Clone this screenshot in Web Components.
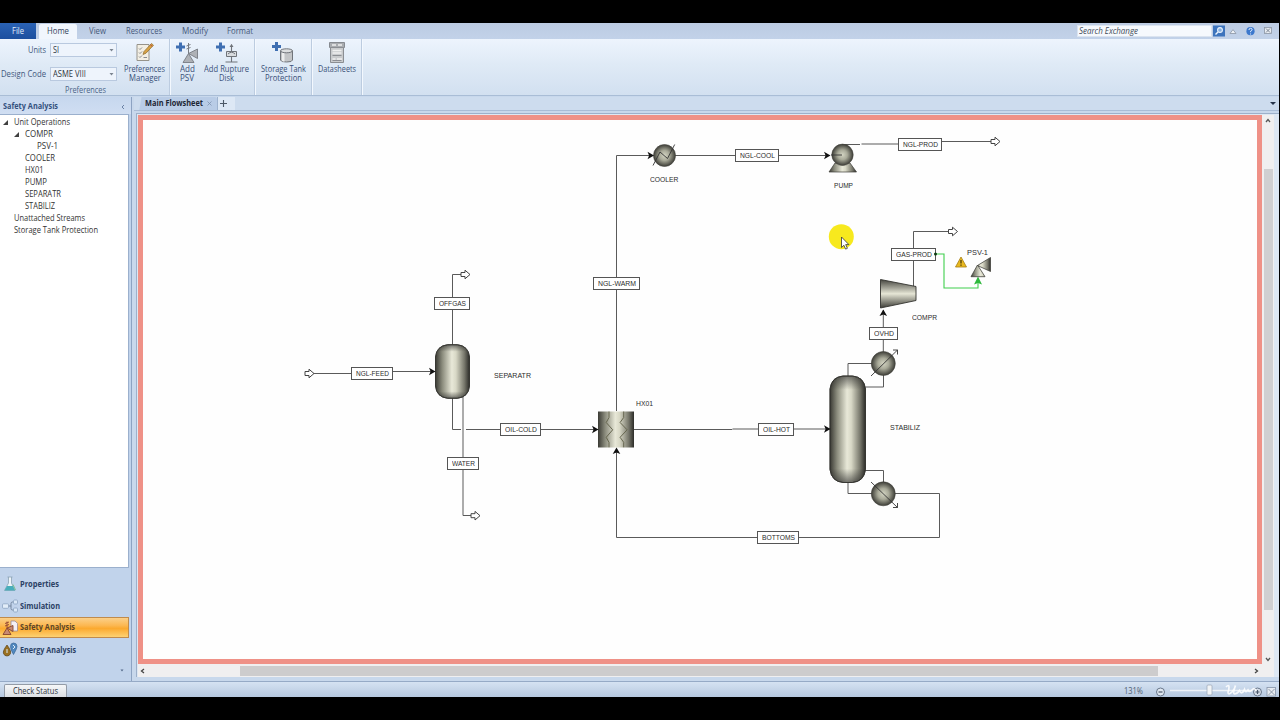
<!DOCTYPE html>
<html lang="en">
<head>
<meta charset="utf-8">
<title>Main Flowsheet</title>
<style>
  body {
    margin: 0;
    width: 1280px;
    height: 720px;
    overflow: hidden;
    background: #000;
    font-family: "Open Sans", "Noto Sans", sans-serif;
    font-size: 8.5px;
    color: #2f3b50;
  }
</style>
</head>
<body>
<safety-app></safety-app>

<script>
  function attach(el, html) {
    const template = document.createElement('template');
    template.innerHTML = html;
    el.attachShadow({ mode: 'open' });
    el.shadowRoot.appendChild(template.content.cloneNode(true));
  }

  // One line of text, condensed so that it fills the width given in "w"
  class FitLabel extends HTMLElement {
    constructor() {
      super();
      attach(this, `
        <style>
          :host { display: inline-block; white-space: nowrap; line-height: 1; }
          span { display: inline-block; transform-origin: 0 50%; }
        </style>
        <span><slot></slot></span>
      `);
    }

    connectedCallback() {
      const w = parseFloat(this.getAttribute('w'));
      const span = this.shadowRoot.querySelector('span');
      if (!w || !this.textContent) return;
      const natural = span.getBoundingClientRect().width;
      span.style.transform = 'scaleX(' + (w / natural).toFixed(4) + ')';
      this.style.width = w + 'px';
    }
  }

  class ComboBox extends HTMLElement {
    constructor() {
      super();
      attach(this, `
        <style>
          :host {
            display: flex;
            align-items: center;
            justify-content: space-between;
            box-sizing: border-box;
            width: 67px;
            height: 14px;
            padding: 0 2px;
            background: #eef4fc;
            border: 1px solid #b9c9df;
            color: #2c3440;
          }
        </style>
        <slot></slot>
        <svg width="5" height="3"><path d="M0.5 0h4L2.5 2.5z" fill="#7b8490"/></svg>
      `);
    }
  }

  class RibbonButton extends HTMLElement {
    constructor() {
      super();
      attach(this, `
        <style>
          :host {
            display: flex;
            flex-direction: column;
            align-items: center;
            color: #3a5078;
          }
          .icon { display: flex; height: 22px; margin: 3px 0 1px; }
          .text { display: flex; flex-direction: column; align-items: center; }
        </style>
        <div class="icon"><slot name="icon"></slot></div>
        <div class="text"><slot></slot></div>
      `);
    }
  }

  class RibbonGroup extends HTMLElement {
    constructor() {
      super();
      attach(this, `
        <style>
          :host {
            display: flex;
            box-sizing: border-box;
            height: 100%;
            border-right: 1px solid #bccce0;
            box-shadow: 1px 0 #f3f8fe;
          }
        </style>
        <slot></slot>
      `);
    }
  }

  class RibbonBar extends HTMLElement {
    constructor() {
      super();
      attach(this, `
        <style>
          :host { display: block; }
          .tabs {
            display: flex;
            align-items: stretch;
            height: 16px;
            background: linear-gradient(#bccbe2, #c2d2e9);
            color: #46587a;
          }
          .tab { display: flex; align-items: center; justify-content: center; }
          .file { width: 35px; padding-right: 1px; background: linear-gradient(#2a62b4, #1c4f9f); color: #e3edfa; margin-right: 3px; }
          .home {
            width: 38px;
            margin-top: 1px;
            background: #f1f6fd;
            border-radius: 2px 2px 0 0;
            color: #34425c;
          }
          .spacer { flex: 1; }
          .search { display: flex; align-items: center; height: 13px; align-self: center; }
          .box {
            display: flex;
            align-items: center;
            box-sizing: border-box;
            width: 135px;
            height: 12px;
            padding-left: 1px;
            background: #f6f9fd;
            border: 1px solid #dbe4f0;
            font-style: italic;
            color: #404a58;
          }
          .panel {
            display: flex;
            box-sizing: border-box;
            height: 57px;
            background: linear-gradient(#edf4fd, #dfeaf6 45%, #d2e0f0);
            border-bottom: 1px solid #a9bdd6;
          }
          .prefs { display: flex; box-sizing: border-box; width: 169px; }
          .fields {
            display: grid;
            grid-template-columns: 46px 67px;
            grid-template-rows: 14px 14px;
            column-gap: 4px;
            row-gap: 10px;
            align-items: center;
            justify-items: end;
            margin-top: 4px;
          }
          .col { display: flex; flex-direction: column; }
          .name { display: flex; margin: 5px 0 0 65px; color: #4c6488; }
          .prefs ribbon-button { margin-left: 7px; }
          .label { color: #41577c; }
          .prefs.pair { padding-left: 1px; width: 84px; }
          .pair ribbon-button { width: 32px; margin-left: 0; }
          .pair ribbon-button + ribbon-button { width: 47px; }
          .tank { width: 57px; }
          .tank ribbon-button, .sheets ribbon-button { flex: 1; }
          .sheets { width: 50px; }
        </style>
        <div class="tabs">
          <div class="tab file"><fit-label w="12">File</fit-label></div>
          <div class="tab home"><fit-label w="22">Home</fit-label></div>
          <div class="tab" style="width:41px"><fit-label w="17">View</fit-label></div>
          <div class="tab" style="width:52px"><fit-label w="36">Resources</fit-label></div>
          <div class="tab" style="width:49px"><fit-label w="26">Modify</fit-label></div>
          <div class="tab" style="width:42px"><fit-label w="26">Format</fit-label></div>
          <div class="spacer"></div>
          <div class="search">
            <div class="box"><fit-label w="59">Search Exchange</fit-label></div>
            <svg width="67" height="13" viewBox="0 0 67 13">
              <rect x="1" y="0.5" width="12" height="11" fill="#3d74bd"/>
              <circle cx="8" cy="5" r="2.4" fill="#86b0e0" stroke="#eaf3fd" stroke-width="1.1"/>
              <path d="M6 7L3.5 9.5" stroke="#eaf3fd" stroke-width="1.4"/>
              <path d="M18 8.5h6L21 4.6z" fill="#eef2f7" stroke="#8a94a3" stroke-width=".8"/>
              <circle cx="38.500" cy="6.2" r="4.1" fill="#3c78cd"/>
              <path d="M36.900 5q.2-1.700 1.700-1.700 1.600.1 1.500 1.400-.1.900-1.500 1.500v1M38.600 8.500v1" fill="none" stroke="#eaf3fd" stroke-width="1"/>
              <rect x="52.500" y="2.500" width="7" height="6" fill="#e9edf3" stroke="#8b95a3" stroke-width=".8"/>
              <path d="M54 3.500l4 4M58 3.500l-4 4" stroke="#7b8593" stroke-width="1"/>
            </svg>
          </div>
        </div>
        <div class="panel">
          <ribbon-group>
            <div class="prefs">
              <div class="col">
                <div class="fields">
                  <fit-label class="label" w="18">Units</fit-label>
                  <combo-box><fit-label w="6">SI</fit-label></combo-box>
                  <fit-label class="label" w="45">Design Code</fit-label>
                  <combo-box><fit-label w="33">ASME VIII</fit-label></combo-box>
                </div>
                <div class="name"><fit-label w="41">Preferences</fit-label></div>
              </div>
              <ribbon-button>
                <svg slot="icon" width="20" height="22" viewBox="0 0 20 22">
                  <path d="M2 2.500h12v16H2z" fill="#f3efe4" stroke="#96938a"/>
                  <path d="M4 6.500l1 1 2-2M4 10.500l1 1 2-2M4 14.500l1 1 2-2M8.500 15.500H12" fill="none" stroke="#7b7f86" stroke-width=".9"/>
                  <path d="M8 12.500l1-3 7.500-8 2 1.700-7.500 8z" fill="#d8a244" stroke="#8b6a2d" stroke-width=".7"/>
                  <path d="M15.300 2.700l2 1.700" stroke="#b84f3c" stroke-width="1"/>
                </svg>
                <fit-label w="41">Preferences</fit-label>
                <fit-label w="32">Manager</fit-label>
              </ribbon-button>
            </div>
          </ribbon-group>
          <ribbon-group>
            <div class="prefs pair">
              <ribbon-button>
                <svg slot="icon" width="22" height="22" viewBox="0 0 22 22">
                  <path d="M4.500 0.500v9M0 5h9" stroke="#3f6fb2" stroke-width="3"/>
                  <path d="M12.500 11.500l-5.500 9h11zM12.500 11.500l9-4.500v9.500z" fill="#aeb1b6" stroke="#6d7178" stroke-width=".8"/>
                  <path d="M12.500 11V1M10.500 4l4-1.500M10.500 7l4-1.500" stroke="#777b82" fill="none"/>
                </svg>
                <fit-label w="15">Add</fit-label>
                <fit-label w="14">PSV</fit-label>
              </ribbon-button>
              <ribbon-button>
                <svg slot="icon" width="22" height="22" viewBox="0 0 22 22">
                  <path d="M4.500 0.500v9M0 5h9" stroke="#3f6fb2" stroke-width="3"/>
                  <path d="M15.500 2.500v9M15.500 14.500v5M9.500 20h12" stroke="#6f7379" fill="none" stroke-width="1.100"/>
                  <path d="M13.500 5l2-3 2 3z" fill="#6f7379"/>
                  <path d="M10.500 9.500h10v5h-10zM12 12q3.500-3.500 7 0" fill="#d9dcdf" stroke="#6f7379"/>
                </svg>
                <fit-label w="45">Add Rupture</fit-label>
                <fit-label w="15">Disk</fit-label>
              </ribbon-button>
            </div>
          </ribbon-group>
          <ribbon-group class="tank">
            <ribbon-button>
              <svg slot="icon" width="22" height="22" viewBox="0 0 22 22">
                <path d="M4.500 0v9M0 4.500h9" stroke="#3f6fb2" stroke-width="3"/>
                <path d="M8.500 9v9q0 2 6 2t6-2V9z" fill="#c3c5c7" stroke="#70747a"/>
                <path d="M10 10v9q1 .7 2.500.8V10z" fill="#eceded"/>
                <ellipse cx="14.500" cy="8.800" rx="6" ry="2" fill="#dddfe0" stroke="#70747a"/>
              </svg>
              <fit-label w="45">Storage Tank</fit-label>
              <fit-label w="37">Protection</fit-label>
            </ribbon-button>
          </ribbon-group>
          <ribbon-group class="sheets">
            <ribbon-button>
              <svg slot="icon" width="16" height="22" viewBox="0 0 16 22">
                <path d="M.500.500h15v5H.500z" fill="#a9acb0" stroke="#868a90"/>
                <path d="M1.500 5.500h13v15h-13z" fill="#c9cbcd" stroke="#8b8e93"/>
                <path d="M3 3h4M9 3h4M3.500 8.500h9M3.500 11h9M3.500 17h3M8 17h5" stroke="#f0f0f0" stroke-width="1.300"/>
                <path d="M3.500 13.500h9M3.500 18.500h9" stroke="#84878c" stroke-width=".9"/>
              </svg>
              <fit-label w="38">Datasheets</fit-label>
            </ribbon-button>
          </ribbon-group>
        </div>
      `);
    }
  }

  class TreeItem extends HTMLElement {
    constructor() {
      super();
      attach(this, `
        <style>
          :host { display: flex; align-items: center; height: 12px; color: #333; }
          svg { width: 5px; height: 5px; visibility: hidden; margin-right: 6px; }
          :host([open]) svg { visibility: visible; }
        </style>
        <svg viewBox="0 0 5 5"><path d="M5 0v5H0z" fill="#404040"/></svg>
        <slot></slot>
      `);
    }

    connectedCallback() {
      const level = Number(this.getAttribute('level'));
      this.style.paddingLeft = 2.500 + level * 11.500 + 'px';
    }
  }

  class NavItem extends HTMLElement {
    constructor() {
      super();
      attach(this, `
        <style>
          :host {
            display: flex;
            align-items: center;
            box-sizing: border-box;
            height: 22px;
            padding-left: 2px;
            gap: 2px;
            font-weight: 700;
            color: #2b4064;
          }
          :host([selected]) {
            height: 21px;
            background: linear-gradient(#fbd08a, #fcb750 40%, #fba92f 55%, #fdd273);
            border: solid #c08b4c;
            border-width: 1px 1px 1px 0;
            margin-bottom: 1px;
            color: #5c4528;
          }
        </style>
        <slot name="icon"></slot>
        <slot></slot>
      `);
    }
  }

  class SideBar extends HTMLElement {
    constructor() {
      super();
      attach(this, `
        <style>
          :host {
            display: flex;
            flex-direction: column;
            box-sizing: border-box;
            width: 132px;
            background: #c1d3eb;
            border-right: 1px solid #8da3c2;
          }
          .head {
            display: flex;
            align-items: center;
            justify-content: space-between;
            box-sizing: border-box;
            height: 17px;
            padding: 2px 6px 0 3px;
            background: linear-gradient(#c6d7ee, #d0def2);
            font-weight: 700;
            color: #34517f;
          }
          .tree {
            box-sizing: border-box;
            flex: 1;
            width: 129px;
            padding-top: 1px;
            background: #fff;
            border: 1px solid #9bb0cd;
            border-left: 0;
          }
          .nav { width: 129px; height: 113px; padding-top: 5px; box-sizing: border-box; }
          .more { display: flex; justify-content: flex-end; padding: 8px 5px 0; }
        </style>
        <div class="head">
          <fit-label w="55">Safety Analysis</fit-label>
          <svg width="4" height="6"><path d="M3 1L1 3l2 2" fill="none" stroke="#60789d" stroke-width=".9"/></svg>
        </div>
        <div class="tree">
          <tree-item level="0" open><fit-label w="56">Unit Operations</fit-label></tree-item>
          <tree-item level="1" open><fit-label w="28">COMPR</fit-label></tree-item>
          <tree-item level="2"><fit-label w="21">PSV-1</fit-label></tree-item>
          <tree-item level="1"><fit-label w="30">COOLER</fit-label></tree-item>
          <tree-item level="1"><fit-label w="18.500">HX01</fit-label></tree-item>
          <tree-item level="1"><fit-label w="22">PUMP</fit-label></tree-item>
          <tree-item level="1"><fit-label w="36">SEPARATR</fit-label></tree-item>
          <tree-item level="1"><fit-label w="30">STABILIZ</fit-label></tree-item>
          <tree-item level="0"><fit-label w="71">Unattached Streams</fit-label></tree-item>
          <tree-item level="0"><fit-label w="84">Storage Tank Protection</fit-label></tree-item>
        </div>
        <div class="nav">
          <nav-item>
            <svg slot="icon" width="16" height="16" viewBox="0 0 16 16">
              <path d="M5.500 1h5M6.500 1v6L2.500 14.500h10.500L9.500 7V1" fill="#eef4f8" stroke="#8ba3b5" stroke-width=".8"/>
              <path d="M5 10h6l2 4.500H2.500z" fill="#48aebb"/>
              <path d="M11 8.500l2.500 5.500" stroke="#7ebf93"/>
            </svg>
            <fit-label w="39">Properties</fit-label>
          </nav-item>
          <nav-item>
            <svg slot="icon" width="16" height="16" viewBox="0 0 16 16">
              <path d="M6 8h3M13 4h-2.500q-1.500 0-1.500 1.500v5q0 1.500 1.500 1.500H13" fill="none" stroke="#74869e"/>
              <rect x=".500" y="5.800" width="6" height="4.500" rx="1" fill="#e2edf9" stroke="#8ea5c2" stroke-width=".8"/>
              <rect x="11.500" y="2" width="4" height="4" rx="1" fill="#dbe9f8" stroke="#8ea5c2" stroke-width=".8"/>
              <rect x="11.500" y="10" width="4" height="4" rx="1" fill="#dbe9f8" stroke="#8ea5c2" stroke-width=".8"/>
            </svg>
            <fit-label w="40">Simulation</fit-label>
          </nav-item>
          <nav-item selected>
            <svg slot="icon" width="16" height="16" viewBox="0 0 16 16">
              <path d="M9 1h4l2.500 2.500V11H9z" fill="#f4f0f4" stroke="#9b8a95" stroke-width=".8"/>
              <path d="M5 8l-4 6.500h8zM5 8l6-2.500v6z" fill="#c88a72" stroke="#87452f" stroke-width=".9"/>
              <path d="M5 8V1.500M3 3.500l4-1.500M3 6l4-1.500" stroke="#9a4c35" fill="none"/>
            </svg>
            <fit-label w="55">Safety Analysis</fit-label>
          </nav-item>
          <nav-item>
            <svg slot="icon" width="16" height="16" viewBox="0 0 16 16">
              <path d="M5 3q4.500 6 3.500 8.500-1 2.500-3.500 2.500t-3.500-2.500Q.500 9 5 3z" fill="#9a7020" stroke="#5c4217" stroke-width=".7"/>
              <path d="M11.500 1q3.500 0 3.500 3.500 0 2-3.500 8-3-5-3-8 0-3.500 3-3.500z" fill="#5189c0" stroke="#3b6797" stroke-width=".7"/>
              <path d="M5 7v4M11 3l2 2-2 2" stroke="#dcebf7" stroke-width="1" fill="none"/>
            </svg>
            <fit-label w="56">Energy Analysis</fit-label>
          </nav-item>
          <div class="more"><svg width="4" height="3"><path d="M0.500.500h3L2 2.500z" fill="#55698a"/></svg></div>
        </div>
      `);
    }
  }

  // Boxed name of a stream, or the bare caption of a block; x, y, w place it on the sheet
  class StreamTag extends HTMLElement {
    constructor() {
      super();
      attach(this, `
        <style>
          :host {
            position: absolute;
            display: flex;
            align-items: center;
            justify-content: center;
            box-sizing: border-box;
            height: 13px;
            background: #fff;
            border: 1px solid #555;
            font: 8px "Liberation Sans", Arial, sans-serif;
            color: #2c2c2c;
          }
          :host([plain]) { border: 0; background: none; }
        </style>
      `);
    }

    connectedCallback() {
      const w = Number(this.getAttribute('w'));
      const text = document.createElement('fit-label');
      text.setAttribute('w', this.hasAttribute('plain') ? w : w - 9);
      text.textContent = this.getAttribute('name');
      this.shadowRoot.appendChild(text);
      this.style.left = this.getAttribute('x') - 138 + 'px';
      this.style.top = this.getAttribute('y') - 115 + 'px';
      this.style.width = w + 'px';
    }
  }

  class FlowSheet extends HTMLElement {
    constructor() {
      super();
      attach(this, `
        <style>
          :host { display: block; position: relative; overflow: hidden; background: #fefefe; }
          .drawing { display: block; }
          .over { position: absolute; inset: 0; }
          .frame { position: absolute; inset: 0; border: 5px solid #ef9187; }
        </style>
        <svg class="drawing" width="1124" height="549" viewBox="138 115 1124 549">
          <defs>
            <linearGradient id="steel">
              <stop offset="0" stop-color="#3a3a34"/>
              <stop offset=".2" stop-color="#8b8c7d"/>
              <stop offset=".48" stop-color="#e8e8d8"/>
              <stop offset=".6" stop-color="#d8d8c6"/>
              <stop offset=".85" stop-color="#77776b"/>
              <stop offset="1" stop-color="#2c2c28"/>
            </linearGradient>
            <linearGradient id="steelV" x2="0" y2="1">
              <stop offset="0" stop-color="#45453f"/>
              <stop offset=".5" stop-color="#e6e6d6"/>
              <stop offset="1" stop-color="#3c3c36"/>
            </linearGradient>
            <linearGradient id="ends" x2="0" y2="1">
              <stop offset="0" stop-color="#222" stop-opacity=".6"/>
              <stop offset=".13" stop-color="#222" stop-opacity="0"/>
              <stop offset=".87" stop-color="#222" stop-opacity="0"/>
              <stop offset="1" stop-color="#222" stop-opacity=".6"/>
            </linearGradient>
            <radialGradient id="ball">
              <stop offset="0" stop-color="#d3d4c2"/>
              <stop offset=".45" stop-color="#a9aa99"/>
              <stop offset="1" stop-color="#3c3c36"/>
            </radialGradient>
            <path id="port" d="M0-2h4v-2.300L9 0 4 4.300V2H0z" fill="#fff" stroke="#444" stroke-width="1"/>
            <path id="head" d="M0 0l-6.500-3.800 1.600 3.800-1.600 3.800z" fill="#111"/>
          </defs>

          <g fill="none" stroke="#5a5a5a" stroke-width="1">
            <path d="M313 373.500h40M393 371.500h42"/>
            <path d="M452.500 345v-70.500h9"/>
            <path d="M452.500 398v31.500h8.500M466 429.500h132"/>
            <path d="M463 397v118.500h8"/>
            <path d="M616.500 411V155.500h37"/>
            <path d="M675 155.500h154M842 144.500h18M861.500 144h38M941 141.500h51"/>
            <path d="M634 429.500h98l.500-.500h97.500"/>
            <path d="M848 376v-12.500h24M883.500 375v12h-18"/>
            <path d="M865 470.500h18.500V482M848 482v11.500h24M895 493.500h44.500v44h-323V449"/>
            <path d="M883.300 352v-42M913.500 287v-55.500h36"/>
          </g>

          <use href="#port" x="305" y="373.500"/>
          <use href="#port" x="461" y="274.500"/>
          <use href="#port" x="471" y="515.700"/>
          <use href="#port" x="991" y="141.500"/>
          <use href="#port" x="948.500" y="231.500"/>

          <!-- separator and column -->
          <g stroke="#33332f" stroke-width=".8">
            <path d="M435.500 357q1-11 12-12.300h10q11 1.300 12 12.300v29q-1 11-12 12.300h-10q-11-1.300-12-12.300z" fill="url(#steel)"/>
            <path d="M435.500 357q1-11 12-12.300h10q11 1.300 12 12.300v29q-1 11-12 12.300h-10q-11-1.300-12-12.300z" fill="url(#ends)"/>
            <path d="M830 389q1.500-12 13-13h9.500q11.500 1 13 13v80.500q-1.500 12-13 13H843q-11.500-1-13-13z" fill="url(#steel)"/>
            <path d="M830 389q1.500-12 13-13h9.500q11.500 1 13 13v80.500q-1.500 12-13 13H843q-11.500-1-13-13z" fill="url(#ends)"/>
          </g>

          <!-- heat exchanger -->
          <rect x="598" y="411.500" width="36" height="36" fill="url(#steel)"/>
          <g fill="none" stroke="#66664f" stroke-width="1">
            <path d="M609 411.500v6l-2.800 5 6.500 7.300-6.500 7.500 2.800 5v5"/>
            <path d="M623.700 411.500v6l-3.600 5 7 7.300-7 7.500 3.600 5v5"/>
          </g>

          <!-- cooler -->
          <circle cx="664.500" cy="155.500" r="11" fill="url(#ball)" stroke="#44443e" stroke-width=".6"/>
          <path d="M653 165.500l7-13.500 7.500 6.500 7.200-14" fill="none" stroke="#333" stroke-width=".9"/>

          <!-- pump -->
          <path d="M835 163l-6 9h27.500l-6.500-9z" fill="url(#steel)" stroke="#3c3c36" stroke-width=".7"/>
          <circle cx="842.500" cy="154.800" r="10.700" fill="url(#ball)" stroke="#44443e" stroke-width=".6"/>
          <path d="M831 155h11" stroke="#333" stroke-width=".9"/>

          <!-- compressor -->
          <path d="M880.500 279.500l35.500 7v14l-35.500 7.500z" fill="url(#steelV)" stroke="#33332f" stroke-width=".9"/>

          <!-- condenser and reboiler -->
          <circle cx="883.300" cy="363.500" r="12" fill="url(#ball)" stroke="#44443e" stroke-width=".6"/>
          <circle cx="883.300" cy="493.800" r="12" fill="url(#ball)" stroke="#44443e" stroke-width=".6"/>
          <path d="M871 376l26.500-26M893 350h4.500v4.500M871 482l26.500 25.500M893 507.500h4.500V503" fill="none" stroke="#333" stroke-width=".9"/>

          <!-- relief valve on the gas product -->
          <path d="M935 254h9v34h34v-6" fill="none" stroke="#3fce4c" stroke-width="1.100"/>
          <path d="M978 276.500l-4 8 4-1.500 4 1.500z" fill="#2eb83c"/>
          <path d="M977.500 265l-6.500 11.700h14zM977.500 265.500l13-8v14z" fill="url(#steel)" stroke="#44443e" stroke-width=".8"/>
          <path d="M961 257l5.500 10h-11z" fill="#e9b91f" stroke="#a67d12" stroke-width=".8" stroke-linejoin="round"/>
          <path d="M961 260v3.500M961 264.600v1.200" stroke="#2d2408" stroke-width="1.100"/>

          <use href="#head" x="435.500" y="371.500"/>
          <use href="#head" x="598.500" y="429.500"/>
          <use href="#head" x="654" y="155.500"/>
          <use href="#head" x="830.500" y="155.500"/>
          <use href="#head" x="830.500" y="429"/>
          <use href="#head" transform="translate(616.500 447.500) rotate(-90)"/>
          <use href="#head" transform="translate(883.300 309.500) rotate(-90)"/>
        </svg>

        <stream-tag name="NGL-FEED" x="351" y="367" w="42"></stream-tag>
        <stream-tag name="OFFGAS" x="434" y="297" w="36"></stream-tag>
        <stream-tag name="OIL-COLD" x="500" y="423" w="41"></stream-tag>
        <stream-tag name="WATER" x="447" y="457" w="32"></stream-tag>
        <stream-tag name="NGL-WARM" x="593" y="277" w="47"></stream-tag>
        <stream-tag name="NGL-COOL" x="735" y="149" w="44"></stream-tag>
        <stream-tag name="NGL-PROD" x="898" y="138" w="44"></stream-tag>
        <stream-tag name="GAS-PROD" x="891" y="248" w="45"></stream-tag>
        <stream-tag name="OVHD" x="869" y="327" w="29"></stream-tag>
        <stream-tag name="OIL-HOT" x="758" y="423" w="36"></stream-tag>
        <stream-tag name="BOTTOMS" x="757" y="531" w="42"></stream-tag>

        <stream-tag plain name="SEPARATR" x="493.500" y="369" w="37"></stream-tag>
        <stream-tag plain name="HX01" x="635.500" y="397" w="17"></stream-tag>
        <stream-tag plain name="COOLER" x="650" y="173" w="28.500"></stream-tag>
        <stream-tag plain name="PUMP" x="833.500" y="179" w="19"></stream-tag>
        <stream-tag plain name="PSV-1" x="967" y="246" w="21"></stream-tag>
        <stream-tag plain name="COMPR" x="912" y="311" w="25"></stream-tag>
        <stream-tag plain name="STABILIZ" x="889.500" y="421" w="30"></stream-tag>

        <svg class="over" width="1124" height="549" viewBox="138 115 1124 549">
          <circle cx="935.500" cy="254" r="1.500" fill="#0d3a12"/>
          <circle cx="841.300" cy="236.700" r="12.500" fill="#f7e91e"/>
          <path d="M841.500 237v10.500l2.400-2.200 1.700 3.800 1.800-.8-1.700-3.700h3.200z" fill="#fff" stroke="#333" stroke-width=".8"/>
        </svg>
        <div class="frame"></div>
      `);
    }
  }

  class WorkArea extends HTMLElement {
    constructor() {
      super();
      attach(this, `
        <style>
          :host { display: flex; flex-direction: column; background: #c8d8ec; }
          .tabs {
            display: flex;
            align-items: flex-end;
            height: 14px;
            padding: 1px 3px 0 3px;
            box-sizing: border-box;
            border-bottom: 1px solid #a9bcd6;
            background: #cddcee;
          }
          .tab {
            display: flex;
            align-items: center;
            box-sizing: border-box;
            width: 80px;
            height: 13px;
            padding-left: 8px;
            gap: 4px;
            background: linear-gradient(100deg, transparent 4px, #b9cce6 5px);
            border-radius: 0 2px 0 0;
            font-weight: 700;
            color: #1d2634;
          }
          .plus { width: 17px; height: 13px; border-left: 1px solid #9eb3cf; background: #dde8f5; }
          .spacer { flex: 1; }
          .frame {
            display: grid;
            grid-template-columns: 1124px 12px;
            grid-template-rows: 549px 13px;
            margin: 2px 0 0 2px;
            padding: 1px 0 0 1px;
            border: solid #9db0ca;
            border-width: 1px 0 0 1px;
            background: #dde7f3;
          }
          .v { display: flex; flex-direction: column; align-items: center; justify-content: space-between; background: #f0eff0; padding: 3px 0 2px; box-sizing: border-box; }
          .v .thumb { width: 9px; height: 441px; margin-bottom: 2px; background: #d0cfd1; }
          .h { display: flex; align-items: center; background: #f0eff0; padding: 0 3px 0 2px; }
          .h .thumb { width: 918px; height: 10px; margin-left: 95px; margin-right: auto; background: #cdcccd; }
          .corner { background: #f0eff0; }
          svg { display: block; }
        </style>
        <div class="tabs">
          <div class="tab">
            <fit-label w="58">Main Flowsheet</fit-label>
            <svg width="5" height="5"><path d="M.500.500l4 4M4.500.500l-4 4" stroke="#7e92b0" stroke-width=".8"/></svg>
          </div>
          <div class="plus"><svg width="14" height="13"><path d="M2 6.500h7M5.500 3v7" stroke="#4c5866" stroke-width="1.100"/></svg></div>
          <div class="spacer"></div>
          <svg width="6" height="9"><path d="M0 1h6L3 4z" fill="#25334a"/></svg>
        </div>
        <div class="frame">
          <flow-sheet></flow-sheet>
          <div class="v">
            <svg width="6" height="5"><path d="M1 4l2-2.500L5 4" fill="none" stroke="#555" stroke-width="1.300"/></svg>
            <div class="thumb"></div>
            <svg width="6" height="5"><path d="M1 1l2 2.500L5 1" fill="none" stroke="#555" stroke-width="1.300"/></svg>
          </div>
          <div class="h">
            <svg width="5" height="6"><path d="M4 1L1.500 3 4 5" fill="none" stroke="#444" stroke-width="1.300"/></svg>
            <div class="thumb"></div>
            <svg width="5" height="6"><path d="M1 1l2.500 2L1 5" fill="none" stroke="#444" stroke-width="1.300"/></svg>
          </div>
          <div class="corner"></div>
        </div>
      `);
    }
  }

  class StatusBar extends HTMLElement {
    constructor() {
      super();
      attach(this, `
        <style>
          :host {
            display: flex;
            justify-content: space-between;
            box-sizing: border-box;
            height: 16px;
            padding-left: 4px;
            background: linear-gradient(#d5e2f2, #b6c8df);
            border-top: 1px solid #96aac6;
          }
          .check {
            display: flex;
            align-items: center;
            justify-content: center;
            box-sizing: border-box;
            width: 63px;
            height: 13px;
            margin-top: 2px;
            background: linear-gradient(#f6f7f8, #dcdfe3);
            border: 1px solid #939ba6;
            border-bottom: 0;
            border-radius: 2px 2px 0 0;
            color: #2f3640;
          }
          .zoom { display: flex; align-items: center; gap: 11px; padding-top: 3px; color: #4f5d72; }
        </style>
        <div class="check"><fit-label w="45">Check Status</fit-label></div>
        <div class="zoom">
          <fit-label w="19">131%</fit-label>
          <svg width="125" height="14" viewBox="1154 683 125 14">
            <circle cx="1160.500" cy="691" r="4" fill="#dfe7f0" stroke="#68768a"/>
            <path d="M1158.500 691h4" stroke="#4a5769" stroke-width="1.200"/>
            <path d="M1170 689.500h82" stroke="#eef2f7" stroke-width="1.500"/>
            <rect x="1207" y="684" width="5" height="10" rx="1" fill="#f2f4f6" stroke="#99a5b5" stroke-width=".7"/>
            <circle cx="1257.500" cy="691" r="4" fill="#d5dde8" stroke="#68768a"/>
            <path d="M1255.500 691h4M1257.500 689v4" stroke="#4a5769" stroke-width="1.200"/>
            <rect x="1267" y="686.500" width="8.500" height="8.500" fill="#e6ebf1" stroke="#8593a8" stroke-width=".8"/>
            <path d="M1268.500 688l6 6M1274.500 688l-6 6" stroke="#7a8799" stroke-width=".8"/>
            <path d="M1226 686q3-3 3 0t-1 5q0 2.500 2 1.500 4-2.500 5.500-8-3 8-1 8.500 2.500 0 5-3.500 2 5 5-1 1 4 3.500.500 1.500 3 4 0t4 1" fill="none" stroke="#fff" stroke-opacity=".85" stroke-width="1.700"/>
          </svg>
        </div>
      `);
    }
  }

  class SafetyApp extends HTMLElement {
    constructor() {
      super();
      attach(this, `
        <style>
          :host {
            display: grid;
            grid-template-rows: 73px 585px 16px;
            width: 1279px;
            height: 674px;
            padding-top: 23px;
          }
          .body { display: grid; grid-template-columns: 132px 1fr; padding-top: 1px; background: #c8d8ec; }
          work-area { padding-left: 2px; }
        </style>
        <ribbon-bar></ribbon-bar>
        <div class="body">
          <side-bar></side-bar>
          <work-area></work-area>
        </div>
        <status-bar></status-bar>
      `);
    }
  }

  customElements.define('fit-label', FitLabel);
  customElements.define('combo-box', ComboBox);
  customElements.define('ribbon-button', RibbonButton);
  customElements.define('ribbon-group', RibbonGroup);
  customElements.define('ribbon-bar', RibbonBar);
  customElements.define('tree-item', TreeItem);
  customElements.define('nav-item', NavItem);
  customElements.define('side-bar', SideBar);
  customElements.define('stream-tag', StreamTag);
  customElements.define('flow-sheet', FlowSheet);
  customElements.define('work-area', WorkArea);
  customElements.define('status-bar', StatusBar);
  customElements.define('safety-app', SafetyApp);
</script>
</body>
</html>
